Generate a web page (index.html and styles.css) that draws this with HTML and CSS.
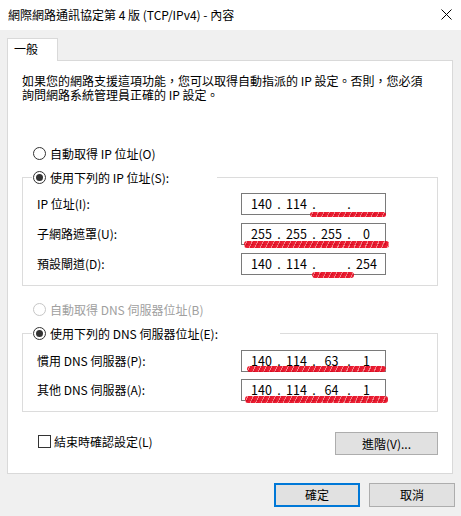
FILE: index.html
```html
<!DOCTYPE html>
<html lang="zh-Hant">
<head>
<meta charset="utf-8">
<title>TCP/IPv4 內容</title>
<link rel="stylesheet" href="styles.css">
</head>
<body>
<div class="dialog">
  <div class="titlebar">
    <span class="title">網際網路通訊協定第 4 版 (TCP/IPv4) - 內容</span>
    <svg class="close" width="11" height="11" viewBox="0 0 11 11"><path d="M0.5 0.5L10.5 10.5M10.5 0.5L0.5 10.5" stroke="#000" stroke-width="1" fill="none"/></svg>
  </div>
  <div class="content">
    <div class="tabs"><div class="tab">一般</div></div>
    <div class="panel">
      <p class="intro">如果您的網路支援這項功能，您可以取得自動指派的 IP 設定。否則，您必須<br>詢問網路系統管理員正確的 IP 設定。</p>

      <div class="radio first"><span class="circle"></span>自動取得 IP 位址(O)</div>

      <div class="group">
        <div class="legend legend-ip"><span class="circle checked"></span>使用下列的 IP 位址(S):</div>
        <div class="row">
          <span class="lbl">IP 位址(I):</span>
          <div class="ipbox">
            <span class="seg">140</span><span class="dot">.</span><span class="seg">114</span><span class="dot">.</span><span class="seg"></span><span class="dot">.</span><span class="seg"></span>
            <span class="redact r1"></span>
          </div>
        </div>
        <div class="row">
          <span class="lbl">子網路遮罩(U):</span>
          <div class="ipbox">
            <span class="seg">255</span><span class="dot">.</span><span class="seg">255</span><span class="dot">.</span><span class="seg">255</span><span class="dot">.</span><span class="seg">0</span>
            <span class="redact r2"></span>
          </div>
        </div>
        <div class="row">
          <span class="lbl">預設閘道(D):</span>
          <div class="ipbox">
            <span class="seg">140</span><span class="dot">.</span><span class="seg">114</span><span class="dot">.</span><span class="seg"></span><span class="dot">.</span><span class="seg">254</span>
            <span class="redact r3"></span>
          </div>
        </div>
      </div>

      <div class="radio dns-auto disabled"><span class="circle"></span>自動取得 DNS 伺服器位址(B)</div>

      <div class="group group-dns">
        <div class="legend legend-dns"><span class="circle checked"></span>使用下列的 DNS 伺服器位址(E):</div>
        <div class="row">
          <span class="lbl">慣用 DNS 伺服器(P):</span>
          <div class="ipbox">
            <span class="seg">140</span><span class="dot">.</span><span class="seg">114</span><span class="dot">.</span><span class="seg">63</span><span class="dot">.</span><span class="seg">1</span>
            <span class="redact r4"></span>
          </div>
        </div>
        <div class="row row-tight">
          <span class="lbl">其他 DNS 伺服器(A):</span>
          <div class="ipbox">
            <span class="seg">140</span><span class="dot">.</span><span class="seg">114</span><span class="dot">.</span><span class="seg">64</span><span class="dot">.</span><span class="seg">1</span>
            <span class="redact r5"></span>
          </div>
        </div>
      </div>

      <div class="bottom-row">
        <div class="check"><span class="box"></span>結束時確認設定(L)</div>
        <button class="btn advanced">進階(V)...</button>
      </div>
    </div>
    <div class="actions">
      <button class="btn ok">確定</button>
      <button class="btn cancel">取消</button>
    </div>
  </div>
</div>
</body>
</html>
```
FILE: styles.css
```css
* { box-sizing: border-box; }

html, body {
  margin: 0;
  padding: 0;
}

body {
  width: 461px;
  height: 516px;
  background: #f0f0f0;
  font-family: "Noto Sans CJK TC", "Noto Sans", sans-serif;
  font-size: 12px;
  color: #000;
  overflow: hidden;
}

.titlebar {
  height: 30px;
  background: #fff;
  display: flex;
  align-items: center;
  justify-content: space-between;
  padding: 0 9px 0 8px;
}

.title {
  line-height: 16px;
  margin-top: -1px;
}

.close {
  display: block;
  margin-top: -1px;
}

.content {
  padding: 8px 8px 0 7px;
}

.tabs {
  height: 22px;
  display: flex;
}

.tab {
  position: relative;
  z-index: 1;
  width: 51px;
  height: 23px;
  background: #fff;
  border: 1px solid #d9d9d9;
  border-bottom: none;
  padding-left: 6px;
  line-height: 20px;
}

.panel {
  background: #fff;
  border: 1px solid #d9d9d9;
  padding: 0 14px 18px 14px;
  height: 414px;
}

.intro {
  margin: 13px 0 0 0;
  line-height: 14px;
  white-space: nowrap;
}

.radio {
  display: flex;
  align-items: center;
  height: 16px;
  padding-left: 11px;
}

.radio.first { margin-top: 43px; }
.radio.dns-auto { margin-top: 15px; }

.circle {
  width: 13px;
  height: 13px;
  border: 1px solid #333;
  border-radius: 50%;
  margin-right: 4px;
  background: #fff;
  display: flex;
  align-items: center;
  justify-content: center;
  flex: none;
}

.circle.checked::after {
  content: "";
  width: 7px;
  height: 7px;
  border-radius: 50%;
  background: #333;
}

.disabled { color: #a0a0a0; }
.disabled .circle { border-color: #c6c6c6; }

.group {
  margin-top: 16px;
  border: 1px solid #dcdcdc;
  padding: 0 51px 10px 14px;
}

.legend {
  display: flex;
  align-items: center;
  height: 16px;
  margin: -9px 0 0 -5px;
  padding-left: 1px;
  background: #fff;
}

.legend-ip { width: 185px; }
.legend-dns { width: 248px; }

.row {
  display: flex;
  align-items: center;
  justify-content: space-between;
  margin-top: 8px;
}

.group-dns .row { margin-top: 9px; }
.group-dns .row.row-tight { margin-top: 7px; }

.lbl {
  line-height: 16px;
}

.ipbox {
  position: relative;
  width: 145px;
  height: 22px;
  border: 1px solid #7a7a7a;
  background: #fff;
  display: flex;
  align-items: center;
  padding-left: 6px;
  font-size: 12.5px;
}

.seg {
  width: 27px;
  text-align: center;
  line-height: 16px;
}

.dot {
  width: 8px;
  text-align: center;
  line-height: 16px;
}

.redact {
  position: absolute;
  border-radius: 3px;
  background:
    repeating-linear-gradient(115deg, rgba(235, 20, 40, 0.95) 0 2px, rgba(245, 80, 90, 0.7) 2px 3px, rgba(225, 0, 25, 0.9) 3px 5px);
  filter: blur(0.5px);
}

.r1 { left: 68px; top: 18px; width: 76px; height: 5px; }
.r2 { left: 2px; top: 17px; width: 145px; height: 7px; }
.r3 { left: 70px; top: 18px; width: 42px; height: 6px; }
.r4 { left: 5px; top: 15px; width: 139px; height: 6px; }
.r5 { left: 3px; top: 16px; width: 143px; height: 7px; }

.bottom-row {
  display: flex;
  justify-content: space-between;
  align-items: flex-start;
  margin-top: 20px;
  padding-left: 16px;
}

.check {
  display: flex;
  align-items: center;
  height: 16px;
  margin-top: 1px;
}

.box {
  width: 13px;
  height: 13px;
  border: 1px solid #333;
  background: #fff;
  margin-right: 3px;
}

.btn {
  font-family: inherit;
  font-size: 12px;
  color: #000;
  background: #e1e1e1;
  border: 1px solid #adadad;
  padding: 0;
  margin: 0;
  line-height: 16px;
}

.advanced {
  width: 103px;
  height: 23px;
}

.actions {
  display: flex;
  justify-content: flex-end;
  gap: 9px;
  margin-top: 9px;
  margin-right: -2px;
}

.ok, .cancel {
  width: 86px;
  height: 24px;
}

.ok {
  border: 2px solid #0078d7;
}
```
